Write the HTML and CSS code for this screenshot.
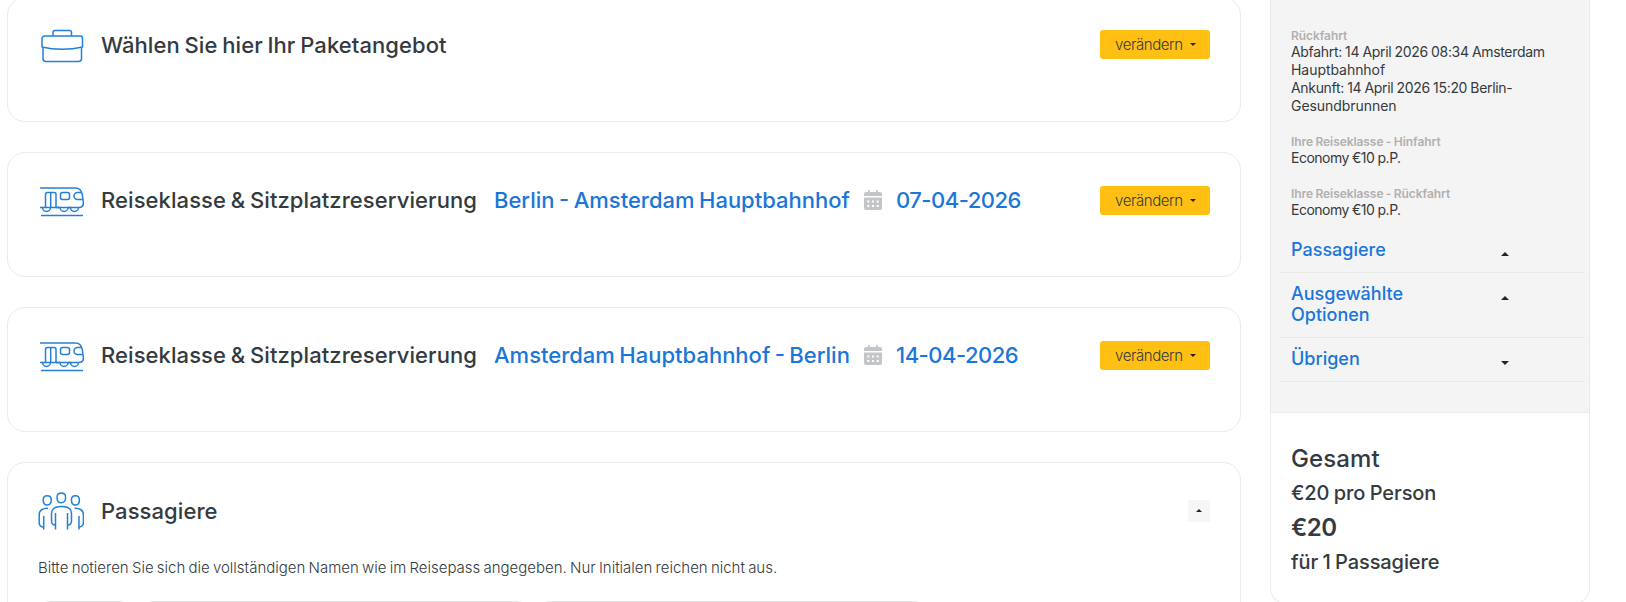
FILE: index.html
```
<!DOCTYPE html>
<html lang="de">
<head>
<meta charset="UTF-8">
<meta name="viewport" content="width=device-width, initial-scale=1.0">
<title>Buchung</title>
<link rel="stylesheet" href="styles.css">
</head>
<body>

<!-- wiederverwendete Icons -->
<svg class="sprite" width="0" height="0">
    <symbol id="icon-train" viewBox="0 0 46 32">
        <path d="M1 2h35.5c4 0 6 2.500 6.800 6.500l1 7.500c.5 3.200-1 5.500-4.600 5.500H39M32 21.500h-3M21 21.500H11.500M1 21.500h2.500"/>
        <path d="M6.500 21.500V8.500a2 2 0 0 1 2-2h6.500a2 2 0 0 1 2 2v13M11.700 6.500v15"/>
        <rect x="21.500" y="6.500" width="9" height="7" rx="2"/>
        <path d="M43 6.500h-4.500a3.500 3.500 0 0 0 0 7h5.500"/>
        <path d="M3.500 21.500a4 4 0 0 0 8 0zM21 21.500a4 4 0 0 0 8 0M31.500 21.500a4 4 0 0 0 8 0M17 21.500h22"/>
        <path d="M2 29.500h42"/>
    </symbol>
    <symbol id="icon-calendar" viewBox="0 0 18 20">
        <path fill="#c3c6c9" d="M4 0h1.800v2h6.400V0H14v2h2a2 2 0 0 1 2 2v2H0V4a2 2 0 0 1 2-2h2zM0 7.500h18V18a2 2 0 0 1-2 2H2a2 2 0 0 1-2-2z"/>
        <path fill="#fff" d="M3.300 10.500h2v2h-2zM8 10.500h2v2H8zM12.700 10.500h2v2h-2zM3.300 15h2v2h-2zM8 15h2v2H8zM12.700 15h2v2h-2z"/>
    </symbol>
</svg>

<div class="page">
    <main class="steps">
        <section class="card">
            <div class="card-head">
                <svg class="icon" viewBox="0 0 46 40">
                    <path d="M14 10V6.500a2 2 0 0 1 2-2H30.500a2 2 0 0 1 2 2V10"/>
                    <path d="M5.500 10H41a2.500 2.500 0 0 1 2.500 2.500V21c-12 3-28.500 3-40.500 0v-8.500A2.500 2.500 0 0 1 5.500 10z"/>
                    <path d="M4 21.500v11a3 3 0 0 0 3 3H39.500a3 3 0 0 0 3-3v-11"/>
                </svg>
                <h2 class="title">Wählen Sie hier Ihr Paketangebot</h2>
                <button class="btn">verändern <span class="caret"></span></button>
            </div>
        </section>

        <section class="card">
            <div class="card-head">
                <svg class="icon icon-train"><use href="#icon-train"/></svg>
                <h2 class="title title-class">Reiseklasse &amp; Sitzplatzreservierung</h2>
                <span class="route">Berlin - Amsterdam Hauptbahnhof</span>
                <svg class="calendar"><use href="#icon-calendar"/></svg>
                <span class="date">07-04-2026</span>
                <button class="btn">verändern <span class="caret"></span></button>
            </div>
        </section>

        <section class="card">
            <div class="card-head">
                <svg class="icon icon-train"><use href="#icon-train"/></svg>
                <h2 class="title title-class">Reiseklasse &amp; Sitzplatzreservierung</h2>
                <span class="route">Amsterdam Hauptbahnhof - Berlin</span>
                <svg class="calendar"><use href="#icon-calendar"/></svg>
                <span class="date">14-04-2026</span>
                <button class="btn">verändern <span class="caret"></span></button>
            </div>
        </section>

        <section class="card card-passengers">
            <div class="card-head">
                <svg class="icon icon-people" viewBox="0 0 46 40">
                    <path d="M19 6.500c0-3 1.500-4.500 4.300-4.500s4.300 1.500 4.300 4.500c0 3.200-1.700 5.300-4.300 5.300S19 9.700 19 6.500z"/>
                    <path d="M5.200 9c0-2.800 1.300-4.200 4-4.200s4 1.400 4 4.200c0 3-1.500 5-4 5s-4-2-4-5zM33.400 9c0-2.800 1.300-4.200 4-4.200s4 1.400 4 4.200c0 3-1.500 5-4 5s-4-2-4-5z"/>
                    <path d="M17.500 38.500V22M29.500 38.500V22M17.500 34c-2.500 0-4-1.500-4-4v-7.500c0-5 3-7 10-7s10 2 10 7V30c0 2.500-1.500 4-4 4"/>
                    <path d="M10 17.200c-6 0-8.800 2-8.800 6.500v8c0 2.300 1.500 4 4.300 4.500M5.700 38.500V25M36.600 17.200c6 0 8.800 2 8.800 6.500v8c0 2.300-1.500 4-4.300 4.500M41 38.500V25"/>
                </svg>
                <h2 class="title">Passagiere</h2>
                <button class="toggle"><span class="caret caret-up"></span></button>
            </div>
            <p class="hint">Bitte notieren Sie sich die vollständigen Namen wie im Reisepass angegeben. Nur Initialen reichen nicht aus.</p>
            <div class="fields">
                <div class="field"></div>
                <div class="field"></div>
                <div class="field"></div>
            </div>
        </section>
    </main>

    <aside class="summary">
        <div class="details">
            <div class="block">
                <h6>Rückfahrt</h6>
                <p>Abfahrt: 14 April 2026 08:34 Amsterdam<br><span class="word">Hauptbahnhof</span><br>Ankunft: 14 April 2026 15:20 Berlin-<br><span class="word">Gesundbrunnen</span></p>
            </div>
            <div class="block">
                <h6>Ihre Reiseklasse - Hinfahrt</h6>
                <p class="price">Economy €10 p.P.</p>
            </div>
            <div class="block">
                <h6>Ihre Reiseklasse - Rückfahrt</h6>
                <p class="price">Economy €10 p.P.</p>
            </div>
            <div class="row">
                <span class="row-title">Passagiere</span>
                <span class="caret caret-up"></span>
            </div>
            <div class="row">
                <span class="row-title">Ausgewählte Optionen</span>
                <span class="caret caret-up"></span>
            </div>
            <div class="row">
                <span class="row-title">Übrigen</span>
                <span class="caret"></span>
            </div>
        </div>
        <div class="total">
            <div class="big">Gesamt</div>
            <div class="small">€20 pro Person</div>
            <div class="big amount">€20</div>
            <div class="small">für 1 Passagiere</div>
        </div>
    </aside>
</div>

</body>
</html>
```
FILE: styles.css
```
* {
    box-sizing: border-box;
}

body {
    margin: 0;
    background-color: #fff;
    color: #343a40;
    font-family: Inter, "Liberation Sans", sans-serif;
    font-size: 15px;
}

h2, h6, p {
    margin: 0;
}

.sprite {
    display: block;
}

.page {
    display: flex;
    align-items: flex-start;
    gap: 29px;
    height: 602px;
    padding-left: 7px;
    overflow: hidden;
}

/* Schritte links */
.steps {
    width: 1234px;
    margin-top: -3px;
    display: flex;
    flex-direction: column;
    gap: 30px;
}

.card {
    height: 125px;
    padding: 22px 30px 0;
    border: 1px solid #ebebeb;
    border-radius: 18px;
}

.card-head {
    display: flex;
    align-items: center;
    height: 50px;
}

.card-passengers {
    height: 220px;
    padding-top: 23px;
}

.icon {
    width: 46px;
    height: 40px;
    margin: 1px 16px 0 1px;
    flex-shrink: 0;
    fill: none;
    stroke: #2480d6;
    stroke-width: 1.5;
}

.icon-train {
    height: 32px;
    margin-top: 3px;
}

.icon-people {
    margin: -1px 17px 0 0;
}

.title {
    font-size: 22px;
    font-weight: 500;
    line-height: 30px;
    letter-spacing: 0.08px;
    word-spacing: -1.200px;
    white-space: nowrap;
}

.title-class {
    width: 393px;
}

.route,
.date {
    color: #1a76d9;
    font-size: 22px;
    font-weight: 500;
    line-height: 30px;
    white-space: nowrap;
}

.route {
    width: 370px;
    word-spacing: -1.4px;
}

.date {
    letter-spacing: -0.5px;
}

.calendar {
    width: 18px;
    height: 20px;
    margin-right: 14px;
}

.btn {
    width: 110px;
    height: 29px;
    margin: 0 0 0 auto;
    padding: 0 14px 0 15px;
    display: flex;
    align-items: center;
    justify-content: space-between;
    border: none;
    border-radius: 3px;
    background-color: #ffc013;
    color: #343a40;
    font-family: inherit;
    font-size: 15px;
    font-weight: 300;
    letter-spacing: -0.4px;
}

.card:first-child .btn {
    margin-top: -1px;
}

.caret {
    border-top: 3px solid #212529;
    border-left: 3px solid transparent;
    border-right: 3px solid transparent;
}

.caret-up {
    border-top: none;
    border-bottom: 3px solid #212529;
}

.toggle {
    width: 22px;
    height: 22px;
    margin: -1px 0 0 auto;
    padding: 0;
    display: flex;
    align-items: center;
    justify-content: center;
    border: none;
    background-color: #f6f6f6;
}

.hint {
    margin-top: 22px;
    font-weight: 300;
    line-height: 20px;
    word-spacing: -1px;
}

.fields {
    display: flex;
    gap: 9px;
    margin-top: 23px;
}

.field {
    width: 94px;
    height: 45px;
    border: 1px solid #e4e4e4;
    border-radius: 12px;
}

.field + .field {
    width: 388px;
}

/* Zusammenfassung rechts */
.summary {
    width: 320px;
    height: 604px;
    border: 1px solid #ebebeb;
    border-top: none;
    border-radius: 0 0 16px 16px;
}

.details {
    height: 413px;
    padding: 28px 4px 0 8px;
    border-bottom: 1px solid #ebebeb;
    background-color: #f4f4f4;
}

.block {
    padding-left: 12px;
    margin-bottom: 19px;
}

.block h6 {
    color: #b0b0b0;
    font-size: 12px;
    font-weight: 600;
    line-height: 15px;
    letter-spacing: -0.07px;
    word-spacing: -0.5px;
}

.block p {
    font-size: 14px;
    line-height: 18px;
    letter-spacing: -0.32px;
    word-spacing: -0.4px;
    white-space: nowrap;
}

.block .word {
    letter-spacing: -0.05px;
}

.block .price {
    letter-spacing: -0.5px;
    word-spacing: -0.3px;
}

.block:nth-child(3) {
    margin-bottom: 10px;
}

.row {
    display: flex;
    justify-content: space-between;
    padding: 10px 76px 12px 12px;
    border-bottom: 1px solid #e9e9e9;
}

.row-title {
    width: 150px;
    color: #1a76d9;
    font-size: 18px;
    font-weight: 500;
    line-height: 21px;
}

.row .caret {
    margin-top: 13px;
    height: 0;
    border-left-width: 4px;
    border-right-width: 4px;
    border-top-width: 4px;
}

.row .caret-up {
    border-top-width: 0;
    border-bottom-width: 4px;
}

.total {
    padding: 29px 20px 0;
}

.big {
    font-size: 24px;
    font-weight: 500;
    line-height: 34px;
    letter-spacing: 0.1px;
}

.amount {
    font-weight: 600;
    letter-spacing: -0.5px;
}

.small {
    font-size: 20px;
    font-weight: 500;
    line-height: 35px;
    letter-spacing: -0.1px;
    word-spacing: -0.8px;
}
```
